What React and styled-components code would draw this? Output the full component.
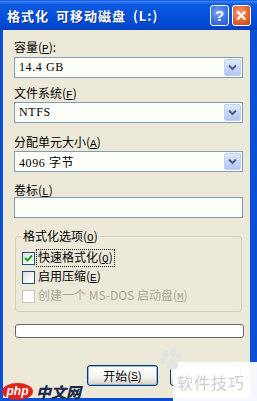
import React from 'react';
import styled, { createGlobalStyle } from 'styled-components';

const GlobalStyle = createGlobalStyle`
  html, body {
    margin: 0;
    padding: 0;
    width: 257px;
    height: 401px;
    overflow: hidden;
    background: #0a4fd6;
  }
  * { box-sizing: border-box; }
`;

const FONT = `"Noto Sans CJK SC", "DejaVu Sans", sans-serif`;

const Window = styled.div`
  position: relative;
  width: 257px;
  height: 401px;
  display: flex;
  flex-direction: column;
  font-family: ${FONT};
  font-size: 12px;
  color: #000;
`;

const TitleBar = styled.div`
  height: 30px;
  display: flex;
  align-items: center;
  padding: 0 6px 0 7px;
  background: linear-gradient(180deg, #3d86f5 0%, #0c5ae0 12%, #0551dc 50%, #0048d4 85%, #0a3fb8 100%);
  border-top: 1px solid #1a63ee;
`;

const Title = styled.div`
  flex: 1;
  color: #fff;
  font-weight: 700;
  font-size: 13px;
  letter-spacing: 1px;
  word-spacing: 3px;
  text-shadow: 1px 1px 0 #0b2f8a;
  white-space: nowrap;
`;

const CaptionButton = styled.div`
  width: 19px;
  height: 21px;
  margin-left: 3px;
  border: 1px solid #fff;
  border-radius: 3px;
  display: flex;
  align-items: center;
  justify-content: center;
  color: #fff;
  font-family: "Liberation Sans", sans-serif;
  font-weight: 700;
  font-size: 15px;
  background: ${({ $close }) =>
    $close
      ? 'radial-gradient(circle at 40% 35%, #f3a07a 0%, #e4632f 55%, #c2421a 100%)'
      : 'radial-gradient(circle at 40% 35%, #7ea6f0 0%, #3d73e0 55%, #2356c9 100%)'};
`;

const Body = styled.div`
  flex: 1;
  display: flex;
  flex-direction: column;
  background: #ece9d8;
  border-left: 3px solid #0a4fd6;
  border-right: 7px solid #0a4fd6;
  border-bottom: 3px solid #0a4fd6;
  padding: 9px 0 0 11px;
`;

const Label = styled.div`
  height: 15px;
  line-height: 15px;
  margin-top: ${({ $mt }) => $mt || 0}px;
  white-space: nowrap;
`;

const Key = styled.span`
  text-decoration: underline;
  font-family: "Liberation Mono", monospace;
  font-size: 11px;
`;

const Field = styled.div`
  width: 229px;
  height: 21px;
  margin-top: ${({ $mt }) => $mt || 0}px;
  border: 1px solid #7f9db9;
  background: #fffffa;
  display: flex;
  align-items: center;
  padding-left: 4px;
  font-family: "Liberation Serif", "Noto Sans CJK SC", serif;
  font-size: 12px;
`;

const FieldText = styled.div`
  flex: 1;
  letter-spacing: 0.6px;
`;

const DropButton = styled.div`
  width: 17px;
  height: 17px;
  margin-right: 1px;
  border-radius: 2px;
  background: linear-gradient(180deg, #dfe8fb 0%, #c3d3f8 60%, #b3c6f3 100%);
  border: 1px solid #c0cff2;
  display: flex;
  align-items: center;
  justify-content: center;
`;

const Group = styled.div`
  position: relative;
  width: 227px;
  height: 76px;
  margin-top: 18px;
  margin-left: 1px;
  border: 1px solid #d0d0bf;
  border-radius: 3px;
  padding: 14px 0 0 6px;
  display: flex;
  flex-direction: column;
  gap: 5px;
`;

const GroupLegend = styled.div`
  position: absolute;
  top: -9px;
  left: 5px;
  padding: 0 2px;
  background: #ece9d8;
  line-height: 15px;
  color: #000;
`;

const CheckRow = styled.div`
  display: flex;
  align-items: center;
  height: 14px;
  gap: 2px;
  color: ${({ $disabled }) => ($disabled ? '#aca899' : '#000')};
`;

const Box = styled.div`
  width: 13px;
  height: 13px;
  border: 1px solid ${({ $disabled }) => ($disabled ? '#cac8bb' : '#1c5180')};
  background: ${({ $disabled }) => ($disabled ? '#fff' : 'linear-gradient(135deg, #dcdcd7 0%, #fff 80%)')};
  display: flex;
  align-items: center;
  justify-content: center;
`;

const CheckText = styled.span`
  padding: 0 1px;
  line-height: 14px;
  outline: ${({ $focus }) => ($focus ? '1px dotted #000' : 'none')};
`;

const Progress = styled.div`
  width: 229px;
  height: 14px;
  margin-top: 12px;
  margin-left: 1px;
  border: 1px solid #686868;
  border-radius: 3px;
  background: #fff;
`;

const ButtonRow = styled.div`
  display: flex;
  gap: 12px;
  margin-top: 27px;
  margin-left: 73px;
`;

const Button = styled.div`
  width: 71px;
  height: 21px;
  border: 1px solid #003c74;
  border-radius: 3px;
  background: linear-gradient(180deg, #ffffff 0%, #f4f3ee 60%, #d6d0c5 100%);
  display: flex;
  align-items: center;
  justify-content: center;
  box-shadow: ${({ $default }) => ($default ? 'inset 0 0 0 1px #97b5e8' : 'none')};
`;

const Watermark = styled.div`
  position: absolute;
  right: 0;
  bottom: 0;
  width: 84px;
  height: 39px;
  background: rgba(255, 255, 255, 0.96);
  display: flex;
  align-items: flex-end;
  padding: 0 0 7px 4px;
  color: #cfcfcf;
  font-size: 16px;
  letter-spacing: 1px;
`;

const Paw = styled.svg`
  position: absolute;
  left: -14px;
  top: -14px;
`;

const PhpMark = styled.div`
  position: absolute;
  left: 2px;
  bottom: 1px;
  display: flex;
  align-items: center;
  gap: 3px;
`;

const PhpBadge = styled.div`
  width: 31px;
  height: 17px;
  border-radius: 50%;
  background: #e2231a;
  color: #fff;
  font-family: "Liberation Sans", sans-serif;
  font-style: italic;
  font-weight: 700;
  font-size: 12px;
  display: flex;
  align-items: center;
  justify-content: center;
  padding-bottom: 2px;
`;

const PhpText = styled.div`
  color: #1b2a4a;
  font-weight: 900;
  font-style: italic;
  font-size: 15px;
  line-height: 16px;
`;

const Chevron = () => (
  <svg width="9" height="7" viewBox="0 0 9 7">
    <path d="M1 1.5 L4.5 5 L8 1.5" fill="none" stroke="#4d6185" strokeWidth="2" />
  </svg>
);

const Tick = () => (
  <svg width="9" height="9" viewBox="0 0 9 9">
    <path d="M1 4 L3.5 6.5 L8 1.5" fill="none" stroke="#21a121" strokeWidth="2" />
  </svg>
);

const Select = ({ value, mt }) => (
  <Field $mt={mt}>
    <FieldText>{value}</FieldText>
    <DropButton>
      <Chevron />
    </DropButton>
  </Field>
);

const App = () => (
  <Window>
    <GlobalStyle />
    <TitleBar>
      <Title>格式化 可移动磁盘 (L:)</Title>
      <CaptionButton>?</CaptionButton>
      <CaptionButton $close>✕</CaptionButton>
    </TitleBar>
    <Body>
      <Label>
        容量(<Key>P</Key>):
      </Label>
      <Select value="14.4 GB" mt={3} />
      <Label $mt={7}>
        文件系统(<Key>F</Key>)
      </Label>
      <Select value="NTFS" mt={2} />
      <Label $mt={11}>
        分配单元大小(<Key>A</Key>)
      </Label>
      <Select value="4096 字节" mt={2} />
      <Label $mt={10}>
        卷标(<Key>L</Key>)
      </Label>
      <Field $mt={0} />
      <Group>
        <GroupLegend>
          格式化选项(<Key>O</Key>)
        </GroupLegend>
        <CheckRow>
          <Box>
            <Tick />
          </Box>
          <CheckText $focus>
            快速格式化(<Key>Q</Key>)
          </CheckText>
        </CheckRow>
        <CheckRow>
          <Box />
          <CheckText>
            启用压缩(<Key>E</Key>)
          </CheckText>
        </CheckRow>
        <CheckRow $disabled>
          <Box $disabled />
          <CheckText>
            创建一个 MS-DOS 启动盘(<Key>M</Key>)
          </CheckText>
        </CheckRow>
      </Group>
      <Progress />
      <ButtonRow>
        <Button $default>
          开始(<Key>S</Key>)
        </Button>
        <Button />
      </ButtonRow>
    </Body>
    <PhpMark>
      <PhpBadge>php</PhpBadge>
      <PhpText>中文网</PhpText>
    </PhpMark>
    <Watermark>
      <Paw width="26" height="24" viewBox="0 0 26 24">
        <g fill="#e2e2e2">
          <ellipse cx="7" cy="6" rx="3" ry="4" />
          <ellipse cx="14" cy="4" rx="3" ry="4" />
          <ellipse cx="20" cy="9" rx="3" ry="3.5" />
          <ellipse cx="4" cy="13" rx="2.5" ry="3" />
          <ellipse cx="13" cy="17" rx="6" ry="5" />
        </g>
      </Paw>
      软件技巧
    </Watermark>
  </Window>
);

export default App;
